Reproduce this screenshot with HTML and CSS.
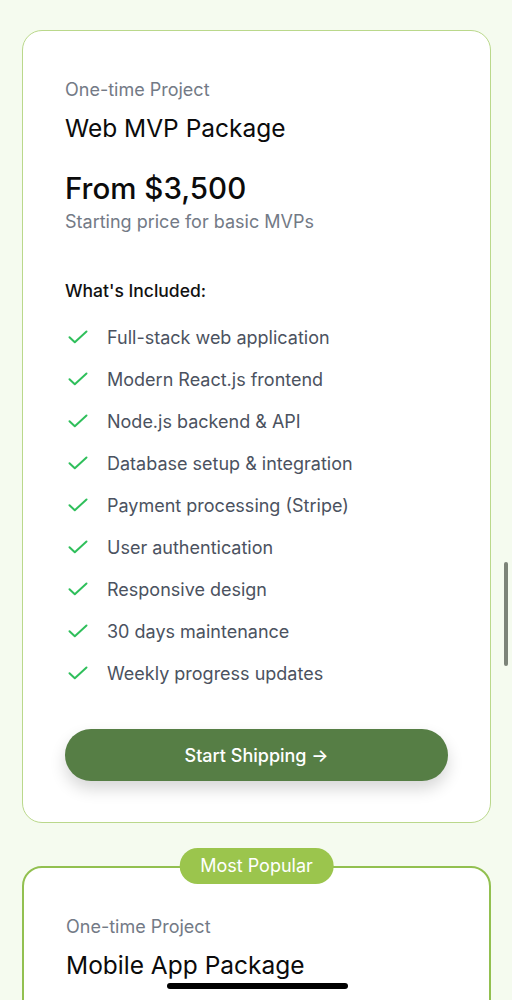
FILE: index.html
```html
<!DOCTYPE html>
<html lang="en">
<head>
<meta charset="utf-8">
<title>Pricing</title>
<link rel="stylesheet" href="styles.css">
</head>
<body>
<main class="page">
  <section class="card">
    <p class="eyebrow">One-time Project</p>
    <h2 class="title">Web MVP Package</h2>
    <p class="price">From $3,500</p>
    <p class="sub">Starting price for basic MVPs</p>
    <h3 class="included">What's Included:</h3>
    <ul class="features">
      <li><svg class="check" viewBox="0 0 20 14"><path d="M1.5 7.2 L6.8 12.2 L18.5 1.5"/></svg><span>Full-stack web application</span></li>
      <li><svg class="check" viewBox="0 0 20 14"><path d="M1.5 7.2 L6.8 12.2 L18.5 1.5"/></svg><span>Modern React.js frontend</span></li>
      <li><svg class="check" viewBox="0 0 20 14"><path d="M1.5 7.2 L6.8 12.2 L18.5 1.5"/></svg><span>Node.js backend &amp; API</span></li>
      <li><svg class="check" viewBox="0 0 20 14"><path d="M1.5 7.2 L6.8 12.2 L18.5 1.5"/></svg><span>Database setup &amp; integration</span></li>
      <li><svg class="check" viewBox="0 0 20 14"><path d="M1.5 7.2 L6.8 12.2 L18.5 1.5"/></svg><span>Payment processing (Stripe)</span></li>
      <li><svg class="check" viewBox="0 0 20 14"><path d="M1.5 7.2 L6.8 12.2 L18.5 1.5"/></svg><span>User authentication</span></li>
      <li><svg class="check" viewBox="0 0 20 14"><path d="M1.5 7.2 L6.8 12.2 L18.5 1.5"/></svg><span>Responsive design</span></li>
      <li><svg class="check" viewBox="0 0 20 14"><path d="M1.5 7.2 L6.8 12.2 L18.5 1.5"/></svg><span>30 days maintenance</span></li>
      <li><svg class="check" viewBox="0 0 20 14"><path d="M1.5 7.2 L6.8 12.2 L18.5 1.5"/></svg><span>Weekly progress updates</span></li>
    </ul>
    <button class="cta">Start Shipping →</button>
  </section>

  <section class="card card-popular">
    <span class="badge">Most Popular</span>
    <p class="eyebrow">One-time Project</p>
    <h2 class="title">Mobile App Package</h2>
  </section>
</main>
<div class="scrollbar"></div>
<div class="home-indicator"></div>
</body>
</html>
```
FILE: styles.css
```css
* { box-sizing: border-box; }
html, body { margin: 0; padding: 0; }
body {
  background: #f5fbef;
  font-family: Inter, "Noto Sans", "Liberation Sans", sans-serif;
  height: 1000px;
  overflow: hidden;
}
.page {
  padding: 30px 21px 0 22px;
}
.card {
  background: #ffffff;
  border: 1px solid #bad88b;
  border-radius: 20px;
  padding: 47px 43px 41px 42px;
  display: flex;
  flex-direction: column;
}
.eyebrow {
  margin: 0;
  font-size: 18px;
  line-height: 24px;
  color: #737a86;
}
.title {
  margin: 11px 0 0;
  font-size: 24.5px;
  line-height: 30px;
  font-weight: 400;
  color: #0b0b0b;
}
.price {
  margin: 27px 0 0;
  font-size: 29.5px;
  line-height: 36px;
  font-weight: 500;
  color: #0b0b0b;
}
.sub {
  margin: 4px 0 0;
  font-size: 18px;
  line-height: 24px;
  color: #737a86;
}
.included {
  margin: 45px 0 0;
  font-size: 17.5px;
  line-height: 24px;
  font-weight: 500;
  color: #111;
}
.features {
  list-style: none;
  margin: 13px 0 0;
  padding: 0;
}
.features li {
  display: flex;
  align-items: center;
  gap: 20px;
  height: 42px;
  font-size: 18px;
  color: #4b5260;
}
.check {
  width: 20px;
  height: 14px;
  margin-left: 3px;
  margin-right: -1px;
  flex: none;
}
.check path {
  fill: none;
  stroke: #2fbf5b;
  stroke-width: 2;
  stroke-linecap: round;
  stroke-linejoin: round;
}
.cta {
  margin-top: 35px;
  height: 52px;
  width: 383px;
  border: none;
  border-radius: 26px;
  background: #567e45;
  color: #fff;
  font-family: inherit;
  font-size: 18px;
  font-weight: 500;
  box-shadow: 0 8px 16px rgba(0, 0, 0, 0.16);
}
.card-popular {
  position: relative;
  margin-top: 43px;
  border: 2px solid #92c050;
  padding-top: 47px;
  min-height: 200px;
}
.badge {
  position: absolute;
  top: -20px;
  left: 50%;
  transform: translateX(-50%);
  height: 36px;
  padding: 0 21px;
  border-radius: 18px;
  background: #9bc54d;
  color: #fff;
  font-size: 18px;
  line-height: 36px;
  white-space: nowrap;
}
.scrollbar {
  position: fixed;
  left: 504px;
  top: 562px;
  width: 4px;
  height: 104px;
  border-radius: 2px;
  background: #7d8479;
}
.home-indicator {
  position: fixed;
  left: 167px;
  top: 983px;
  width: 181px;
  height: 6px;
  border-radius: 3px;
  background: #000;
}
```
